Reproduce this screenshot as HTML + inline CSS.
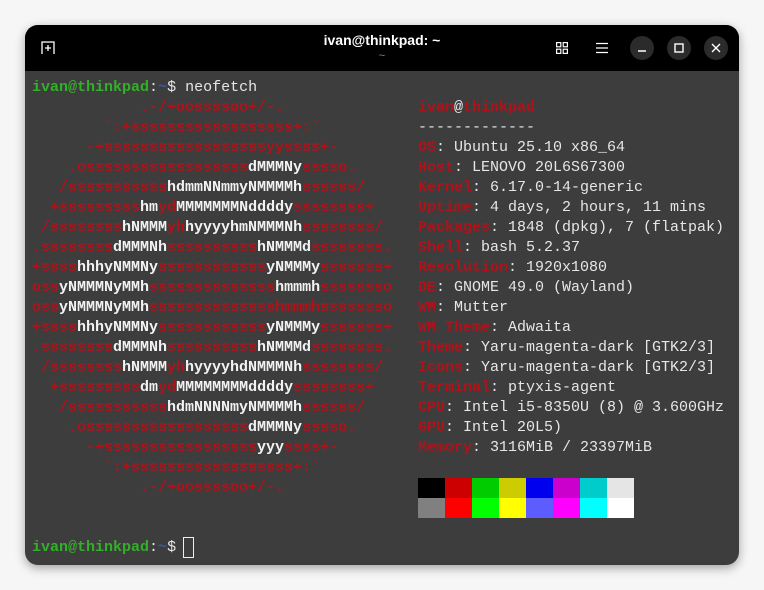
<!DOCTYPE html>
<html><head><meta charset="utf-8"><style>
html,body{margin:0;padding:0;width:764px;height:590px;background:#f6f6f6;overflow:hidden}
.win{position:absolute;left:25px;top:25px;width:714px;height:540px;border-radius:13px;background:#3d3d3d;overflow:hidden;box-shadow:0 3px 10px rgba(0,0,0,.35)}
.hdr{position:absolute;left:0;top:0;width:714px;height:46px;background:#000}
.title{position:absolute;left:0;width:714px;top:7px;text-align:center;color:#fff;font:bold 14px "Liberation Sans",sans-serif}
.sub{position:absolute;left:0;width:714px;top:25px;text-align:center;color:#888;font:11px "Liberation Sans",sans-serif}
.cb{position:absolute;top:11px;width:24px;height:24px;border-radius:50%;background:#2b2b2b}
pre{position:absolute;margin:0;font:15px/20px "Liberation Mono",monospace;color:#e6e6e6}
.r{color:#b0121a;font-weight:bold}
.w{color:#f2f2f2;font-weight:bold}
.g{color:#33b02a;font-weight:bold}
.b{color:#2f5bb0;font-weight:bold}
.pal{position:absolute;left:393px;width:27px;height:20px}
</style></head><body>
<div class="win">
<div class="hdr">
<svg style="position:absolute;left:16px;top:16px" width="14" height="14" viewBox="0 0 14 14"><path d="M1 13V1h12v12" fill="none" stroke="#fff" stroke-width="1.3"/><path d="M7 4v6M4 7h6" stroke="#fff" stroke-width="1.3"/></svg>
<div class="title">ivan@thinkpad: ~</div>
<div class="sub">~</div>
<svg style="position:absolute;left:531px;top:17px" width="12" height="12" viewBox="0 0 12 12"><g fill="none" stroke="#fff" stroke-width="1.2"><rect x=".6" y=".6" width="4.2" height="4.2"/><rect x="7.2" y=".6" width="4.2" height="4.2"/><rect x=".6" y="7.2" width="4.2" height="4.2"/><rect x="7.2" y="7.2" width="4.2" height="4.2"/></g></svg>
<svg style="position:absolute;left:571px;top:17px" width="12" height="12" viewBox="0 0 12 12"><path d="M0 1.5h12M0 6h12M0 10.5h12" stroke="#fff" stroke-width="1.2"/></svg>
<div class="cb" style="left:605px"><svg width="24" height="24"><path d="M8 15h8" stroke="#fff" stroke-width="1.4"/></svg></div>
<div class="cb" style="left:642px"><svg width="24" height="24"><rect x="8" y="8" width="8" height="8" fill="none" stroke="#fff" stroke-width="1.4"/></svg></div>
<div class="cb" style="left:679px"><svg width="24" height="24"><path d="M8 8l8 8M16 8l-8 8" stroke="#fff" stroke-width="1.4"/></svg></div>
</div>
<pre style="left:7px;top:53px"><span class="g">ivan@thinkpad</span>:<span class="b">~</span>$ neofetch
<span class="r">            .-/+oossssoo+/-.
        `:+ssssssssssssssssss+:`
      -+ssssssssssssssssssyyssss+-
    .ossssssssssssssssss<span class="w">dMMMNy</span>sssso.
   /sssssssssss<span class="w">hdmmNNmmyNMMMMh</span>ssssss/
  +sssssssss<span class="w">hm</span>yd<span class="w">MMMMMMMNddddy</span>ssssssss+
 /ssssssss<span class="w">hNMMM</span>yh<span class="w">hyyyyhmNMMMNh</span>ssssssss/
.ssssssss<span class="w">dMMMNh</span>ssssssssss<span class="w">hNMMMd</span>ssssssss.
+ssss<span class="w">hhhyNMMNy</span>ssssssssssss<span class="w">yNMMMy</span>sssssss+
oss<span class="w">yNMMMNyMMh</span>ssssssssssssss<span class="w">hmmmh</span>ssssssso
oss<span class="w">yNMMMNyMMh</span>sssssssssssssshmmmhssssssso
+ssss<span class="w">hhhyNMMNy</span>ssssssssssss<span class="w">yNMMMy</span>sssssss+
.ssssssss<span class="w">dMMMNh</span>ssssssssss<span class="w">hNMMMd</span>ssssssss.
 /ssssssss<span class="w">hNMMM</span>yh<span class="w">hyyyyhdNMMMNh</span>ssssssss/
  +sssssssss<span class="w">dm</span>yd<span class="w">MMMMMMMMddddy</span>ssssssss+
   /sssssssssss<span class="w">hdmNNNNmyNMMMMh</span>ssssss/
    .ossssssssssssssssss<span class="w">dMMMNy</span>sssso.
      -+sssssssssssssssss<span class="w">yyy</span>ssss+-
        `:+ssssssssssssssssss+:`
            .-/+oossssoo+/-.</span>


<span class="g">ivan@thinkpad</span>:<span class="b">~</span>$ </pre>
<div style="position:absolute;left:158px;top:512px;width:9px;height:19px;border:1px solid #eee"></div>
<pre style="left:393px;top:73px"><span class="r">ivan</span>@<span class="r">thinkpad</span>
-------------
<span class="r">OS</span>: Ubuntu 25.10 x86_64
<span class="r">Host</span>: LENOVO 20L6S67300
<span class="r">Kernel</span>: 6.17.0-14-generic
<span class="r">Uptime</span>: 4 days, 2 hours, 11 mins
<span class="r">Packages</span>: 1848 (dpkg), 7 (flatpak)
<span class="r">Shell</span>: bash 5.2.37
<span class="r">Resolution</span>: 1920x1080
<span class="r">DE</span>: GNOME 49.0 (Wayland)
<span class="r">WM</span>: Mutter
<span class="r">WM Theme</span>: Adwaita
<span class="r">Theme</span>: Yaru-magenta-dark [GTK2/3]
<span class="r">Icons</span>: Yaru-magenta-dark [GTK2/3]
<span class="r">Terminal</span>: ptyxis-agent
<span class="r">CPU</span>: Intel i5-8350U (8) @ 3.600GHz
<span class="r">GPU</span>: Intel 20L5)
<span class="r">Memory</span>: 3116MiB / 23397MiB</pre>
<div class="pal" style="top:453px;left:393px;background:#000"></div>
<div class="pal" style="top:453px;left:420px;background:#cc0000"></div>
<div class="pal" style="top:453px;left:447px;background:#00cc00"></div>
<div class="pal" style="top:453px;left:474px;background:#cccc00"></div>
<div class="pal" style="top:453px;left:501px;background:#0000ee"></div>
<div class="pal" style="top:453px;left:528px;background:#cc00cc"></div>
<div class="pal" style="top:453px;left:555px;background:#00cccc"></div>
<div class="pal" style="top:453px;left:582px;background:#e5e5e5"></div>
<div class="pal" style="top:473px;left:393px;background:#808080"></div>
<div class="pal" style="top:473px;left:420px;background:#ff0000"></div>
<div class="pal" style="top:473px;left:447px;background:#00ff00"></div>
<div class="pal" style="top:473px;left:474px;background:#ffff00"></div>
<div class="pal" style="top:473px;left:501px;background:#5c5cff"></div>
<div class="pal" style="top:473px;left:528px;background:#ff00ff"></div>
<div class="pal" style="top:473px;left:555px;background:#00ffff"></div>
<div class="pal" style="top:473px;left:582px;background:#ffffff"></div>
</div>
</body></html>
